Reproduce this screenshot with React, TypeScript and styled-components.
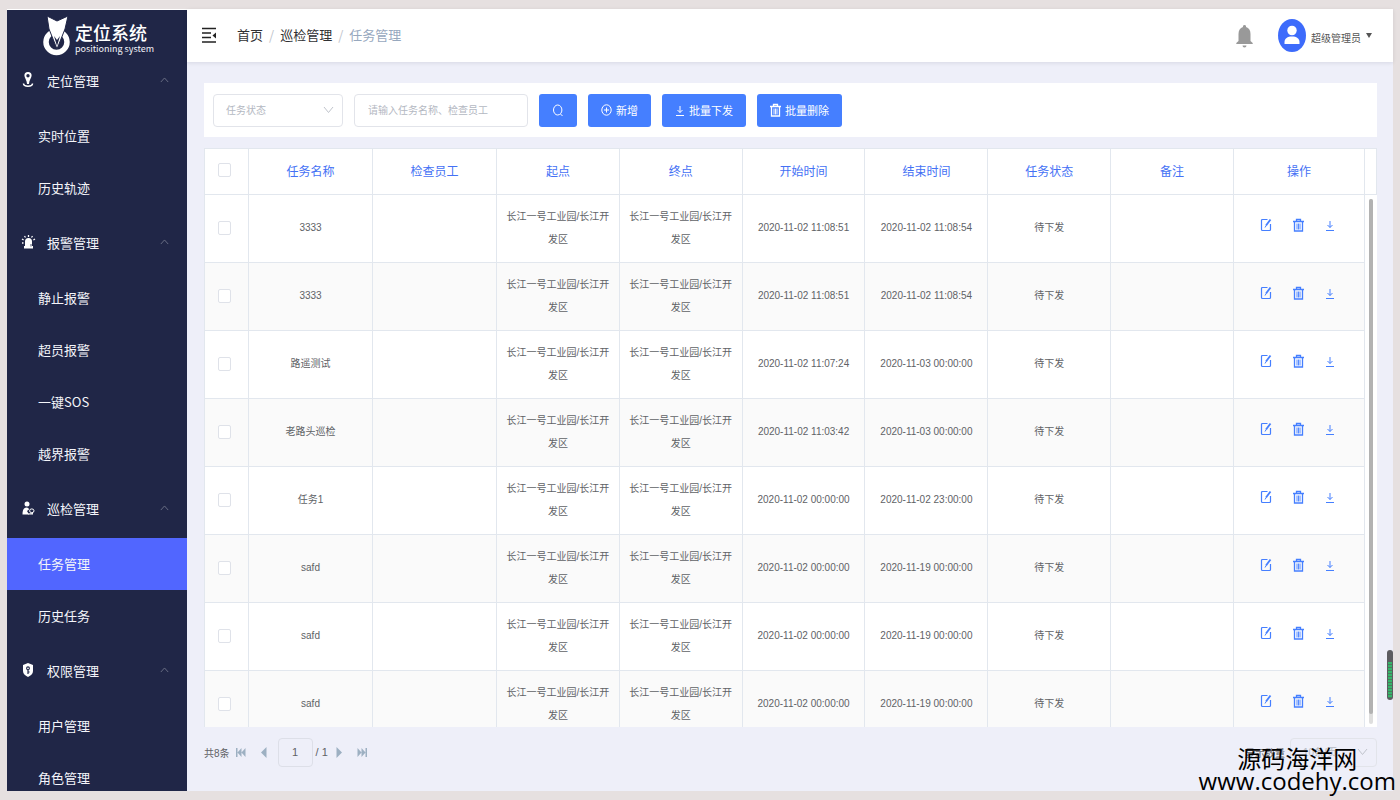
import React from "react";
import styled, { createGlobalStyle } from "styled-components";

const GlobalStyle = createGlobalStyle`
  * { box-sizing: border-box; }
  body {
    margin: 0;
    background: #e6e0e0;
    color: #606266;
    font-family: "Liberation Sans", "Noto Sans CJK SC", sans-serif;
    font-size: 10px;
  }
  button, input, select { font: inherit; color: inherit; }
  button { cursor: pointer; }
`;

const Frame = styled.div`
  display: flex;
  height: 100vh;
  min-height: 400px;
  padding: 9px 7px;
  position: relative;
`;

/* ---------- sidebar ---------- */

const Sidebar = styled.aside`
  flex: none;
  width: 180px;
  overflow: hidden;
  background: #202647;
  border-top: 1px solid #fff;
  color: #f4f5fa;
  font-family: "Noto Sans CJK SC", sans-serif;
`;

const Brand = styled.div`
  display: flex;
  align-items: center;
  gap: 4px;
  height: 42px;
  padding: 10px 0 0 36px;
`;

const BrandText = styled.div`
  display: flex;
  flex-direction: column;
  padding-top: 4px;
`;

const BrandName = styled.span`
  font-size: 18px;
  line-height: 22px;
  font-weight: 500;
  color: #fff;
`;

const BrandSub = styled.span`
  font-size: 9px;
  line-height: 12px;
`;

const GroupButton = styled.button`
  display: flex;
  align-items: center;
  width: 100%;
  height: 58px;
  padding: 0 18px 2px 13px;
  border: 0;
  background: none;
  font-size: 13px;
  color: inherit;
`;

const GroupLabel = styled.span`
  flex: 1;
  padding-left: 11px;
  text-align: left;
`;

const MenuLink = styled.a<{ $active?: boolean }>`
  display: flex;
  align-items: center;
  height: 52px;
  padding: 0 0 2px 31px;
  background: ${(p) => (p.$active ? "#5166ff" : "transparent")};
  color: inherit;
  font-size: 13px;
  text-decoration: none;
`;

/* ---------- top bar ---------- */

const Main = styled.main`
  flex: 1;
  min-width: 0;
  display: flex;
  flex-direction: column;
  background: #eeeff9;
`;

const TopBar = styled.header`
  display: flex;
  align-items: center;
  flex: none;
  height: 53px;
  padding: 0 21px 0 14px;
  background: #fff;
  box-shadow: 0 1px 4px rgba(0, 21, 41, 0.1);
`;

const IconButton = styled.button`
  display: flex;
  padding: 0;
  border: 0;
  background: none;
`;

const Crumbs = styled.nav`
  display: flex;
  flex: 1;
  gap: 6px;
  padding: 0 0 2px 20px;
  font-family: "Noto Sans CJK SC", sans-serif;
  font-size: 13px;
  line-height: 18px;
  color: #c0c4cc;
`;

const Crumb = styled.a<{ $current?: boolean }>`
  color: ${(p) => (p.$current ? "#97a8be" : "#303133")};
  text-decoration: none;
`;

const UserButton = styled.button`
  display: flex;
  align-items: center;
  gap: 5px;
  margin-left: 25px;
  padding: 0;
  border: 0;
  background: none;
  color: #555;
`;

const UserName = styled.span`
  padding-top: 3px;
`;

/* ---------- filters ---------- */

const Content = styled.div`
  flex: 1;
  min-height: 0;
  display: flex;
  flex-direction: column;
  padding: 21px 16px 0 17px;
`;

const FilterBar = styled.form`
  display: flex;
  flex: none;
  align-items: center;
  gap: 11px;
  height: 54px;
  padding: 0 9px;
  background: #fff;
`;

const SelectBox = styled.div<{ $width: number }>`
  display: grid;
  align-items: center;
  width: ${(p) => p.$width}px;
  > * { grid-area: 1 / 1; }
  > svg { justify-self: end; margin-right: 9px; pointer-events: none; }
`;

const Select = styled.select<{ $height: number }>`
  appearance: none;
  width: 100%;
  height: ${(p) => p.$height}px;
  padding: 0 12px;
  border: 1px solid #e2e4ea;
  border-radius: 4px;
  background: transparent;
  color: #b4b8c2;
`;

const SearchInput = styled.input`
  width: 174px;
  height: 33px;
  padding: 0 13px;
  border: 1px solid #e2e4ea;
  border-radius: 4px;
  &::placeholder { color: #b4b8c2; }
`;

const ActionButton = styled.button`
  display: flex;
  align-items: center;
  gap: 4px;
  height: 33px;
  padding: 0 13px;
  border: 0;
  border-radius: 3px;
  background: #457fff;
  color: #fff;
  font-size: 11px;
`;

/* ---------- table ---------- */

const TableCard = styled.section`
  display: flex;
  flex: 1;
  min-height: 0;
  margin-top: 11px;
  overflow: hidden;
  background: #fff;
`;

const TableView = styled.div`
  flex: 1;
  min-width: 0;
  overflow: hidden;
`;

const Table = styled.table`
  width: 100%;
  table-layout: fixed;
  border-collapse: separate;
  border-spacing: 0;
  border-top: 1px solid #e2e7ee;
  border-left: 1px solid #e2e7ee;
  text-align: center;
`;

const Th = styled.th`
  height: 46px;
  padding: 0 8px 3px;
  border-right: 1px solid #e2e7ee;
  border-bottom: 1px solid #e2e7ee;
  color: #4471f5;
  font-size: 12px;
  font-weight: 400;
`;

const Row = styled.tr`
  &:nth-child(even) { background: #fafafa; }
`;

const Td = styled.td`
  height: 68px;
  padding: 0 8px 2px;
  border-right: 1px solid #e2e7ee;
  border-bottom: 1px solid #e2e7ee;
  line-height: 23px;
`;

const Col = styled.col<{ $width?: number }>`
  width: ${(p) => (p.$width ? `${p.$width}px` : "auto")};
`;

const Check = styled.input`
  appearance: none;
  display: block;
  width: 13px;
  height: 14px;
  margin: 0 0 0 5px;
  border: 1px solid #dfe2e9;
  border-radius: 2px;
  background: #fff;
`;

const RowActions = styled.div`
  display: flex;
  justify-content: center;
  align-items: center;
  gap: 21px;
  padding: 0 4px 5px 0;
  color: #457fff;
`;

const Gutter = styled.div`
  display: flex;
  flex-direction: column;
  flex: none;
  width: 12px;
`;

const GutterHead = styled.div`
  flex: none;
  height: 47px;
  border: solid #e2e7ee;
  border-width: 1px 1px 1px 0;
`;

const Track = styled.div`
  flex: 1;
  width: 4px;
  margin: 4px 0 3px 4px;
  border-radius: 2px;
  background: #dedede;
`;

const Thumb = styled.div`
  height: 98%;
  border-radius: 2px;
  background: #b2b2b2;
`;

/* ---------- pager ---------- */

const Pager = styled.footer`
  display: flex;
  align-items: center;
  flex: none;
  height: 64px;
  padding-bottom: 14px;
`;

const PageButton = styled.button`
  display: flex;
  justify-content: center;
  width: 23px;
  padding: 0;
  border: 0;
  background: none;
  color: #9db0c2;
`;

const PageInput = styled.input`
  width: 35px;
  height: 29px;
  margin: 0 3px 0 2px;
  padding: 0;
  border: 1px solid #dddfe8;
  border-radius: 4px;
  background: transparent;
  text-align: center;
  font-size: 11px;
`;

const PageTotal = styled.span`
  font-size: 11px;
`;

const PageSize = styled.div`
  display: flex;
  align-items: center;
  gap: 5px;
  margin-left: auto;
`;

/* ---------- overlays ---------- */

const Watermark = styled.div`
  position: absolute;
  right: 4px;
  bottom: 8px;
  color: #000;
  text-align: center;
  font-family: "Open Sans", "Noto Sans CJK SC", sans-serif;
  font-size: 24px;
  line-height: 22px;
  pointer-events: none;
`;

const LevelMeter = styled.div`
  position: absolute;
  right: 7px;
  bottom: 100px;
  width: 6px;
  height: 50px;
  padding: 12px 1px 2px;
  border-radius: 3px;
  background: #5c5c60;
`;

const LevelFill = styled.div`
  height: 100%;
  background: repeating-linear-gradient(#35b56a 0 2px, #4b7a5c 2px 3px);
`;

/* ---------- icons ---------- */

const LogoMark = () => (
  <svg width="28" height="40" viewBox="0 0 28 40" aria-hidden="true">
    <ellipse cx="13.500" cy="26" rx="10.500" ry="10.500" fill="none" stroke="#fff" strokeWidth="5.500" />
    <path fill="#fff" stroke="#202647" strokeWidth="1" d="M4 0 L14 5 L25 0 L22 13 L14 33 L6 13 Z" />
    <path fill="#202647" d="M11 20 L14 30 L17 20 L14 24 Z" />
  </svg>
);

const PinIcon = () => (
  <svg width="16" height="18" viewBox="0 0 16 18" aria-hidden="true" fill="none">
    <path fill="#fff" fillRule="evenodd" d="M8 1a3.600 3.600 0 0 0-3.600 3.700c0 2 2.600 4.500 2.600 8.300h2c0-3.800 2.600-6.300 2.600-8.300A3.600 3.600 0 0 0 8 1zm0 2a1.700 1.700 0 1 1 0 3.400A1.700 1.700 0 0 1 8 3z" />
    <path stroke="#fff" strokeWidth="1.500" d="M3.500 12.500C3.500 14.500 5 15.200 8 15.200S12.500 14.500 12.500 12.500" />
  </svg>
);

const SirenIcon = () => (
  <svg width="16" height="18" viewBox="0 0 16 18" aria-hidden="true" fill="none" stroke="#fff" strokeWidth="1.300">
    <path fill="#fff" stroke="none" d="M5 13V8.500a3.500 3.500 0 0 1 7 0V13h1v2.500H4V13z" />
    <path d="M8.500 2v2M4.500 3l1 1.500M12.500 3l-1 1.500M2 6l1.600 1M15 6l-1.600 1M2 10h1.500" />
    <path stroke="#202647" strokeWidth="0.800" d="M11 11v2.500" />
  </svg>
);

const InspectorIcon = () => (
  <svg width="16" height="18" viewBox="0 0 16 18" aria-hidden="true" fill="#fff">
    <circle cx="7" cy="5" r="2.500" />
    <path d="M2.500 15.500c0-4 1-7 4-7 1.500 0 2.300.8 2.500 2l-2 1.500 2 3.500z" />
    <ellipse cx="11.800" cy="11.800" rx="2.200" ry="1.900" fill="none" stroke="#fff" strokeWidth="1" />
    <path d="M8 14.500l5-.5v1.500H8z" />
  </svg>
);

const ShieldIcon = () => (
  <svg width="16" height="18" viewBox="0 0 16 18" aria-hidden="true">
    <path fill="#fff" d="M8 2l5 2v6c0 3-2 4.500-5 6-3-1.500-5-3-5-6V4z" />
    <circle cx="8" cy="7.300" r="1.400" fill="none" stroke="#202647" strokeWidth="1.100" />
    <path stroke="#202647" strokeWidth="1.200" d="M8 8.700V13M8 11h1.600" />
  </svg>
);

const ChevronIcon = ({ up = false, color = "#c0c4cc", width = 11 }) => (
  <svg width={width} height="8" viewBox="0 0 11 8" fill="none" stroke={color} aria-hidden="true">
    <path d={up ? "M1 6.500L5.500 1.500L10 6.500" : "M1 1L5.500 6.500L10 1"} />
  </svg>
);

const FoldIcon = () => (
  <svg width="16" height="18" viewBox="0 0 16 18" fill="none" stroke="#222" strokeWidth="1.500" aria-hidden="true">
    <path d="M1 1.500h14M1 6h9M1 10.500h9M1 15h14" />
    <path fill="#222" stroke="none" d="M15 5.500v6l-3.500-3z" />
  </svg>
);

const BellIcon = () => (
  <svg width="17" height="24" viewBox="0 0 17 24" fill="#999" aria-hidden="true">
    <path d="M8.500 1a1.500 1.500 0 0 1 1.500 2c3 .8 4.500 3.500 4.500 7v7l2.200 2v1H.3v-1l2.200-2v-7c0-3.500 1.500-6.200 4.500-7A1.500 1.500 0 0 1 8.500 1zM6.500 21.500h4a2 2 0 0 1-4 0z" />
  </svg>
);

const AvatarIcon = () => (
  <svg width="28" height="33" viewBox="0 0 28 33" aria-hidden="true">
    <ellipse cx="14" cy="16.500" rx="14" ry="16.500" fill="#3d6bfb" />
    <ellipse cx="14" cy="11.500" rx="4.700" ry="4.800" fill="#fff" />
    <path fill="#fff" d="M6.500 25v-2c0-3.500 3-5.500 7.500-5.500s7.500 2 7.500 5.500v2z" />
  </svg>
);

const CaretIcon = () => (
  <svg width="6" height="5" viewBox="0 0 6 5" fill="#555" aria-hidden="true">
    <path d="M0 0h6L3 5z" />
  </svg>
);

const SearchIcon = () => (
  <svg width="12" height="13" viewBox="0 0 12 13" fill="none" stroke="#fff" aria-hidden="true">
    <ellipse cx="5.700" cy="6" rx="4.200" ry="5" />
    <path d="M8.500 10l2 2" />
  </svg>
);

const PlusIcon = () => (
  <svg width="11" height="12" viewBox="0 0 11 12" fill="none" stroke="#fff" aria-hidden="true">
    <ellipse cx="5.500" cy="6" rx="4.700" ry="5.200" />
    <path d="M5.500 3.500v5M3 6h5" />
  </svg>
);

const DownloadIcon = () => (
  <svg width="10" height="14" viewBox="0 0 10 14" fill="none" stroke="currentColor" aria-hidden="true">
    <path d="M5 3v6.500M2.500 7L5 9.500 7.500 7M1 12.500h8" />
  </svg>
);

const TrashIcon = () => (
  <svg width="11" height="14" viewBox="0 0 11 14" fill="none" stroke="currentColor" aria-hidden="true">
    <path strokeWidth="1.300" d="M0 3.500h11M3.500 3.500V1.500h4v2M1.500 4v9h8V4" />
    <path strokeWidth="0.900" d="M4 5.500v6M5.500 5.500v6M7 5.500v6" />
  </svg>
);

const EditIcon = () => (
  <svg width="12" height="14" viewBox="0 0 12 14" fill="none" stroke="currentColor" aria-hidden="true">
    <path strokeWidth="1.200" d="M7.500 1.500H2.500q-1 0-1 1v9q0 1 1 1h7q1 0 1-1V6" />
    <path strokeWidth="1.800" d="M10.500 1.500L6 7.500" />
    <path d="M5 9.500l1.200-2" />
  </svg>
);

const SkipIcon = ({ back = false }) => (
  <svg width="10" height="9" viewBox="0 0 10 9" fill="currentColor" aria-hidden="true">
    <path d={back ? "M0 0h1.500v9H0zM5.500 0v9l-4-4.500zM9.500 0v9l-4-4.500z" : "M8.500 0H10v9H8.500zM.5 0v9l4-4.500zM4.500 0v9l4-4.500z"} />
  </svg>
);

const StepIcon = ({ back = false }) => (
  <svg width="6" height="11" viewBox="0 0 6 11" fill="currentColor" aria-hidden="true">
    <path d={back ? "M5.500 0v11L0 5.500z" : "M.5 0v11L6 5.500z"} />
  </svg>
);

/* ---------- data ---------- */

const groups = [
  { label: "定位管理", icon: <PinIcon />, items: ["实时位置", "历史轨迹"] },
  { label: "报警管理", icon: <SirenIcon />, items: ["静止报警", "超员报警", "一键SOS", "越界报警"] },
  { label: "巡检管理", icon: <InspectorIcon />, items: ["任务管理", "历史任务"] },
  { label: "权限管理", icon: <ShieldIcon />, items: ["用户管理", "角色管理"] },
];

const columns = [
  { title: "任务名称", width: 124 },
  { title: "检查员工", width: 124 },
  { title: "起点" },
  { title: "终点" },
  { title: "开始时间" },
  { title: "结束时间" },
  { title: "任务状态" },
  { title: "备注" },
  { title: "操作", width: 131 },
];

const place = "长江一号工业园/长江开发区";

const tasks = [
  { name: "3333", start: "2020-11-02 11:08:51", end: "2020-11-02 11:08:54" },
  { name: "3333", start: "2020-11-02 11:08:51", end: "2020-11-02 11:08:54" },
  { name: "路遥测试", start: "2020-11-02 11:07:24", end: "2020-11-03 00:00:00" },
  { name: "老路头巡检", start: "2020-11-02 11:03:42", end: "2020-11-03 00:00:00" },
  { name: "任务1", start: "2020-11-02 00:00:00", end: "2020-11-02 23:00:00" },
  { name: "safd", start: "2020-11-02 00:00:00", end: "2020-11-19 00:00:00" },
  { name: "safd", start: "2020-11-02 00:00:00", end: "2020-11-19 00:00:00" },
  { name: "safd", start: "2020-11-02 00:00:00", end: "2020-11-19 00:00:00" },
];

export default function App() {
  return (
    <Frame>
      <GlobalStyle />
      <Sidebar>
        <Brand>
          <LogoMark />
          <BrandText>
            <BrandName>定位系统</BrandName>
            <BrandSub>positioning system</BrandSub>
          </BrandText>
        </Brand>
        <nav>
          {groups.map((group) => (
            <div key={group.label}>
              <GroupButton type="button" aria-expanded="true">
                {group.icon}
                <GroupLabel>{group.label}</GroupLabel>
                <ChevronIcon up color="#777c91" width={9} />
              </GroupButton>
              {group.items.map((item) => (
                <MenuLink key={item} href="#" $active={item === "任务管理"}>
                  {item}
                </MenuLink>
              ))}
            </div>
          ))}
        </nav>
      </Sidebar>

      <Main>
        <TopBar>
          <IconButton type="button" aria-label="收起菜单">
            <FoldIcon />
          </IconButton>
          <Crumbs>
            <Crumb href="#">首页</Crumb>
            <span>/</span>
            <Crumb href="#">巡检管理</Crumb>
            <span>/</span>
            <Crumb href="#" $current>
              任务管理
            </Crumb>
          </Crumbs>
          <IconButton type="button" aria-label="通知">
            <BellIcon />
          </IconButton>
          <UserButton type="button">
            <AvatarIcon />
            <UserName>超级管理员</UserName>
            <CaretIcon />
          </UserButton>
        </TopBar>

        <Content>
          <FilterBar onSubmit={(e) => e.preventDefault()}>
            <SelectBox $width={130}>
              <Select $height={33} aria-label="任务状态">
                <option>任务状态</option>
              </Select>
              <ChevronIcon />
            </SelectBox>
            <SearchInput aria-label="搜索任务" placeholder="请输入任务名称、检查员工" />
            <ActionButton type="submit" aria-label="搜索">
              <SearchIcon />
            </ActionButton>
            <ActionButton type="button">
              <PlusIcon />
              新增
            </ActionButton>
            <ActionButton type="button">
              <DownloadIcon />
              批量下发
            </ActionButton>
            <ActionButton type="button">
              <TrashIcon />
              批量删除
            </ActionButton>
          </FilterBar>

          <TableCard>
            <TableView>
              <Table>
                <colgroup>
                  <Col $width={44} />
                  {columns.map((c) => (
                    <Col key={c.title} $width={c.width} />
                  ))}
                </colgroup>
                <thead>
                  <tr>
                    <Th>
                      <Check type="checkbox" aria-label="全选" />
                    </Th>
                    {columns.map((c) => (
                      <Th key={c.title}>{c.title}</Th>
                    ))}
                  </tr>
                </thead>
                <tbody>
                  {tasks.map((task, i) => (
                    <Row key={i}>
                      <Td>
                        <Check type="checkbox" aria-label={`选择 ${task.name}`} />
                      </Td>
                      <Td>{task.name}</Td>
                      <Td />
                      <Td>{place}</Td>
                      <Td>{place}</Td>
                      <Td>{task.start}</Td>
                      <Td>{task.end}</Td>
                      <Td>待下发</Td>
                      <Td />
                      <Td>
                        <RowActions>
                          <IconButton type="button" aria-label="编辑">
                            <EditIcon />
                          </IconButton>
                          <IconButton type="button" aria-label="删除">
                            <TrashIcon />
                          </IconButton>
                          <IconButton type="button" aria-label="下发">
                            <DownloadIcon />
                          </IconButton>
                        </RowActions>
                      </Td>
                    </Row>
                  ))}
                </tbody>
              </Table>
            </TableView>
            <Gutter>
              <GutterHead />
              <Track>
                <Thumb />
              </Track>
            </Gutter>
          </TableCard>

          <Pager>
            <span>共8条</span>
            <PageButton type="button" aria-label="首页">
              <SkipIcon back />
            </PageButton>
            <PageButton type="button" aria-label="上一页">
              <StepIcon back />
            </PageButton>
            <PageInput aria-label="页码" defaultValue="1" />
            <PageTotal>/ 1</PageTotal>
            <PageButton type="button" aria-label="下一页">
              <StepIcon />
            </PageButton>
            <PageButton type="button" aria-label="末页">
              <SkipIcon />
            </PageButton>
            <PageSize>
              <label htmlFor="page-size">显示数量</label>
              <SelectBox $width={87}>
                <Select id="page-size" $height={29}>
                  <option>10条/页</option>
                </Select>
                <ChevronIcon />
              </SelectBox>
            </PageSize>
          </Pager>
        </Content>
      </Main>

      <LevelMeter>
        <LevelFill />
      </LevelMeter>
      <Watermark>
        源码海洋网
        <br />
        www.codehy.com
      </Watermark>
    </Frame>
  );
}
